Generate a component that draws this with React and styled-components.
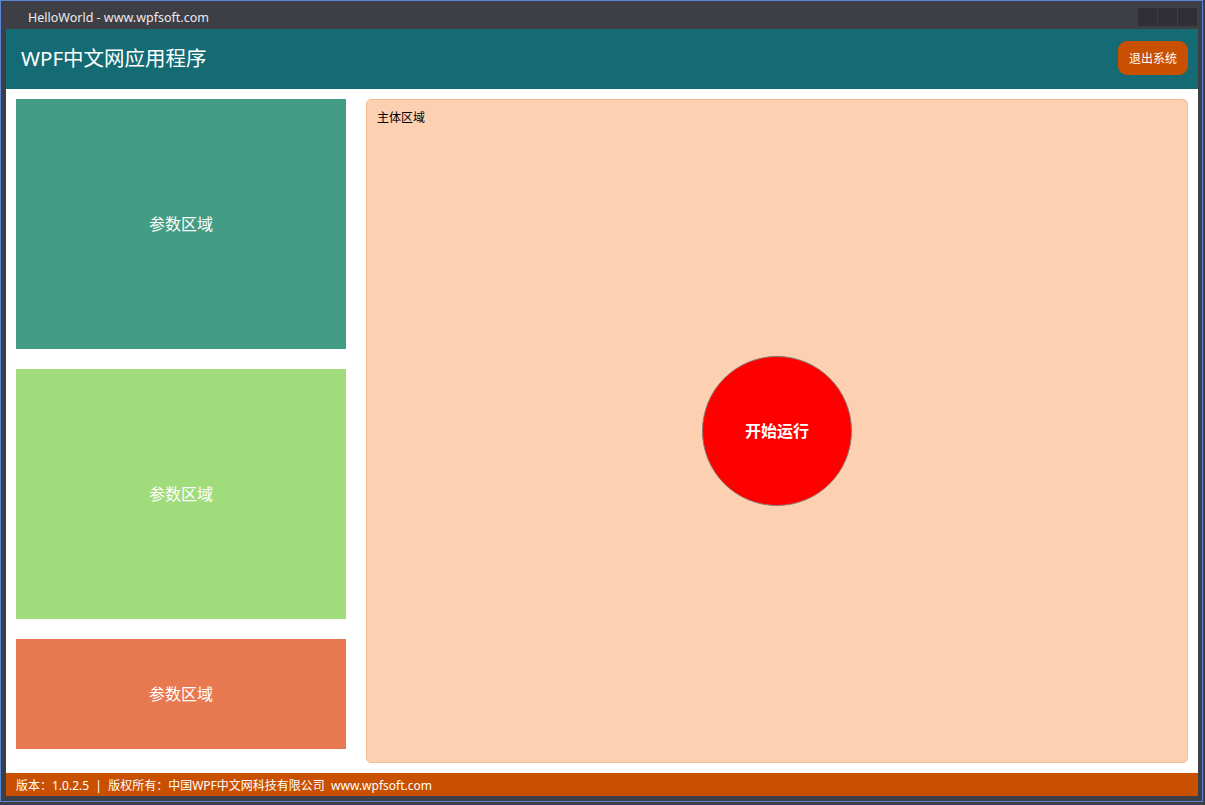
import React from 'react';
import styled, { createGlobalStyle } from 'styled-components';

const GlobalStyle = createGlobalStyle`
   html, body {
      margin: 0;
      padding: 0;
      background: #3e3e45;
   }
   body {
      font-family: 'Noto Sans', 'Noto Sans CJK SC', sans-serif;
   }
`;

const Window = styled.div`
   box-sizing: border-box;
   width: 1203px;
   height: 802px;
   border: 1px solid #5b86d6;
   background: #3e3e45;
   padding: 0 4px 5px 5px;
   display: flex;
   flex-direction: column;
`;

const TitleBar = styled.div`
   height: 28px;
   display: flex;
   align-items: center;
   justify-content: space-between;
   padding-left: 22px;
   font-size: 12.5px;
   color: #ececec;
`;

const TitleText = styled.span`
   margin-top: 4px;
`;

const Controls = styled.div`
   display: flex;
   gap: 1px;
   margin-top: 3px;
   margin-right: 1px;
`;

const Control = styled.div`
   width: 19px;
   height: 18px;
   background: #2f2f35;
`;

const Header = styled.div`
   height: 60px;
   background: #146b73;
   display: flex;
   align-items: center;
   justify-content: space-between;
   padding: 0 10px 0 15px;
`;

const AppTitle = styled.h1`
   margin: 0 0 5px;
   font-size: 20.5px;
   font-weight: normal;
   color: #ffffff;
`;

const ExitButton = styled.button`
   width: 70px;
   height: 34px;
   margin-bottom: 2px;
   border: none;
   border-radius: 9px;
   background: #c85000;
   color: #ffffff;
   font-family: inherit;
   font-size: 12px;
   cursor: pointer;
`;

const Body = styled.div`
   flex: 1;
   background: #ffffff;
   padding: 10px;
   display: flex;
   gap: 20px;
`;

const Side = styled.div`
   width: 330px;
   display: flex;
   flex-direction: column;
   gap: 20px;
`;

const ParamBox = styled.div`
   height: ${props => props.h}px;
   background: ${props => props.bg};
   display: flex;
   align-items: center;
   justify-content: center;
   color: #ffffff;
   font-size: 16px;
   padding-bottom: 2px;
   box-sizing: border-box;
`;

const Main = styled.div`
   flex: 1;
   position: relative;
   background: #fcd0b0;
   border: 1px solid #f2bc94;
   border-radius: 5px;
   display: flex;
   align-items: center;
   justify-content: center;
`;

const MainLabel = styled.span`
   position: absolute;
   top: 8px;
   left: 10px;
   font-size: 12px;
   color: #000000;
`;

const RunButton = styled.button`
   box-sizing: border-box;
   width: 150px;
   height: 150px;
   border-radius: 50%;
   border: 1px solid #8a7a70;
   background: #ff0000;
   color: #ffffff;
   font-family: inherit;
   font-size: 16px;
   font-weight: bold;
   padding: 0 0 3px;
   cursor: pointer;
`;

const Footer = styled.div`
   height: 23px;
   background: #c85000;
   display: flex;
   align-items: center;
   padding-left: 10px;
   color: #ffffff;
   font-size: 12px;
   white-space: pre;
`;

const params = [
   { h: 250, bg: '#439c84' },
   { h: 250, bg: '#a0dc7c' },
   { h: 110, bg: '#e87850' },
];

export default function App() {
   return (
      <Window>
         <GlobalStyle />
         <TitleBar>
            <TitleText>HelloWorld - www.wpfsoft.com</TitleText>
            <Controls>
               <Control />
               <Control />
               <Control />
            </Controls>
         </TitleBar>
         <Header>
            <AppTitle>WPF中文网应用程序</AppTitle>
            <ExitButton>退出系统</ExitButton>
         </Header>
         <Body>
            <Side>
               {params.map((p, i) => (
                  <ParamBox key={i} h={p.h} bg={p.bg}>
                     参数区域
                  </ParamBox>
               ))}
            </Side>
            <Main>
               <MainLabel>主体区域</MainLabel>
               <RunButton>开始运行</RunButton>
            </Main>
         </Body>
         <Footer>版本：1.0.2.5  |  版权所有：中国WPF中文网科技有限公司  www.wpfsoft.com</Footer>
      </Window>
   );
}
